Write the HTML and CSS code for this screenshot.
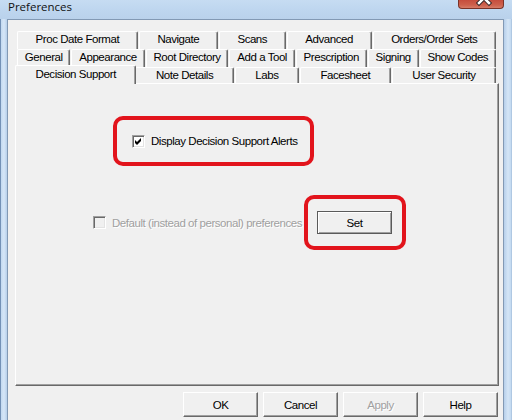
FILE: index.html
```html
<!DOCTYPE html>
<html>
<head>
<meta charset="utf-8">
<title>Preferences</title>
<link rel="stylesheet" href="styles.css">
</head>
<body>
<div class="window">
  <div class="titlebar">
    <span class="title">Preferences</span>
    <div class="close">
      <svg width="46" height="12" viewBox="0 0 46 12">
        <path d="M20 -6 L30 4 M30 -6 L20 4" stroke="#3a2a2a" stroke-width="4.5" stroke-linecap="square" fill="none"/>
        <path d="M20 -6 L30 4 M30 -6 L20 4" stroke="#ffffff" stroke-width="2.5" stroke-linecap="square" fill="none"/>
      </svg>
    </div>
  </div>
  <div class="frame-body">
    <div class="side side-left"></div>
    <div class="client">
      <div class="tabs">
        <div class="tabrow">
          <div class="tab">Proc Date Format</div>
          <div class="tab">Navigate</div>
          <div class="tab">Scans</div>
          <div class="tab">Advanced</div>
          <div class="tab">Orders/Order Sets</div>
        </div>
        <div class="tabrow">
          <div class="tab">General</div>
          <div class="tab">Appearance</div>
          <div class="tab">Root Directory</div>
          <div class="tab">Add a Tool</div>
          <div class="tab">Prescription</div>
          <div class="tab">Signing</div>
          <div class="tab">Show Codes</div>
        </div>
        <div class="tabrow tabrow-last">
          <div class="tab tab-sel">Decision Support</div>
          <div class="tab">Note Details</div>
          <div class="tab">Labs</div>
          <div class="tab">Facesheet</div>
          <div class="tab">User Security</div>
        </div>
      </div>
      <div class="panel">
        <div class="mark mark-alert">
          <div class="check">
            <span class="box">
              <svg width="9" height="9" viewBox="0 0 9 9"><polygon points="1,3 3,5 7,1 7,4 3,8 1,6" fill="#000"/></svg>
            </span>
            <span class="check-label">Display Decision Support Alerts</span>
          </div>
        </div>
        <div class="row-default">
          <div class="check check-disabled">
            <span class="box box-disabled"></span>
            <span class="check-label">Default (instead of personal) preferences</span>
          </div>
          <div class="mark mark-set">
            <div class="btn btn-default">Set</div>
          </div>
        </div>
      </div>
      <div class="buttons">
        <div class="btn btn-bottom">OK</div>
        <div class="btn btn-bottom">Cancel</div>
        <div class="btn btn-bottom btn-disabled">Apply</div>
        <div class="btn btn-bottom">Help</div>
      </div>
    </div>
    <div class="side side-right"></div>
  </div>
</div>
</body>
</html>
```

FILE: styles.css
```css
* { box-sizing: border-box; }
html, body { margin: 0; padding: 0; }
body {
  width: 512px;
  height: 420px;
  overflow: hidden;
  font-family: "Liberation Sans", Arial, sans-serif;
  font-size: 11.5px;
  letter-spacing: -0.45px;
  color: #000;
}
.window {
  height: 420px;
  display: flex;
  flex-direction: column;
  background: #bcd4ee;
}
.titlebar {
  height: 19px;
  flex: none;
  display: flex;
  align-items: flex-start;
  background: linear-gradient(to bottom, #c6dcf2 0, #bed6ef 10px, #b9d1eb 19px);
}
.title {
  font-family: "Open Sans", "Noto Sans", sans-serif;
  font-size: 11.5px;
  letter-spacing: 0;
  line-height: 14px;
  padding-left: 8px;
  color: #111;
}
.close {
  margin-left: auto;
  margin-right: 8px;
  width: 46px;
  height: 10px;
  margin-top: -1px;
  border: 1px solid #7a3328;
  border-top: none;
  border-radius: 0 0 4px 4px;
  background: linear-gradient(to bottom, #c4493a 0, #cd604c 6px, #d98571 10px);
  overflow: hidden;
}
.close svg { display: block; }
.frame-body {
  flex: 1;
  display: flex;
  min-height: 0;
}
.side { flex: none; }
.side-left {
  width: 7px;
  background: linear-gradient(to right, #7391b6 0, #7391b6 1px, #c2d9f0 1px, #d6e6f7 4px, #b6cfea 7px);
}
.side-right {
  width: 8px;
  background: linear-gradient(to right, #b6cfea 0, #d4e5f6 4px, #c2d9f0 7px, #9cb7d6 8px);
}
.client {
  flex: 1;
  background: #f0f0f0;
  border: 1px solid #8299b4;
  border-bottom: none;
  padding: 11px 4px 0 7px;
  display: flex;
  flex-direction: column;
}
.tabs {
  margin: 0 3px 0 2px;
  display: flex;
  flex-direction: column;
}
.tabrow {
  display: flex;
  gap: 1px;
  height: 18px;
}
.tabrow-last { height: 16px; }
.tab {
  flex: 1 1 auto;
  padding: 0 4px;
  text-align: center;
  white-space: nowrap;
  line-height: 15px;
  background: #f0f0f0;
  border-top: 1px solid #ffffff;
  border-left: 1px solid #ffffff;
  border-right: 1px solid #696969;
  box-shadow: inset -1px 0 #a0a0a0;
  border-radius: 2px 2px 0 0;
}
.tab-sel {
  position: relative;
  z-index: 1;
  align-self: flex-start;
  height: 19px;
  margin: -2px -2px 0 -2px;
  line-height: 14px;
  padding-top: 1px;
}
.panel {
  height: 303px;
  flex: none;
  background: #f0f0f0;
  border-top: 1px solid #ffffff;
  border-left: 1px solid #ffffff;
  border-right: 1px solid #696969;
  border-bottom: 1px solid #696969;
  box-shadow: inset -1px -1px #a0a0a0;
  display: flex;
  flex-direction: column;
  align-items: flex-start;
}
.mark {
  border: 4px solid #e2141c;
  border-radius: 10px;
  display: flex;
  align-items: center;
}
.mark-alert {
  margin: 32px 0 0 97px;
  width: 201px;
  height: 50px;
  padding-left: 15px;
}
.check {
  display: flex;
  align-items: center;
  gap: 6px;
  white-space: nowrap;
}
.box {
  width: 13px;
  height: 13px;
  flex: none;
  background: #ffffff;
  border-top: 1px solid #a0a0a0;
  border-left: 1px solid #a0a0a0;
  border-right: 1px solid #ffffff;
  border-bottom: 1px solid #ffffff;
  box-shadow: inset 1px 1px #696969, inset -1px -1px #e3e3e3;
  padding: 1px;
}
.box svg { display: block; }
.box-disabled { background: #f0f0f0; }
.check-disabled .check-label {
  color: #a0a0a0;
  text-shadow: 1px 1px 0 #ffffff;
}
.row-default {
  margin: 29px 0 0 77px;
  display: flex;
  align-items: center;
}
.mark-set {
  margin-left: 2px;
  width: 102px;
  height: 55px;
  padding-left: 9px;
}
.btn {
  width: 75px;
  height: 25px;
  flex: none;
  background: #f0f0f0;
  border-top: 1px solid #ffffff;
  border-left: 1px solid #ffffff;
  border-right: 1px solid #696969;
  border-bottom: 1px solid #696969;
  box-shadow: inset -1px -1px #a0a0a0;
  display: flex;
  align-items: center;
  justify-content: center;
}
.btn-default {
  height: 23px;
  border: 1px solid #5a5a5a;
  box-shadow: inset 1px 1px #ffffff, inset -1px -1px #a0a0a0;
}
.btn-disabled {
  color: #a0a0a0;
  text-shadow: 1px 1px 0 #ffffff;
}
.buttons {
  display: flex;
  justify-content: flex-end;
  gap: 5px;
  margin-top: 6px;
  padding-right: 1px;
}
```
